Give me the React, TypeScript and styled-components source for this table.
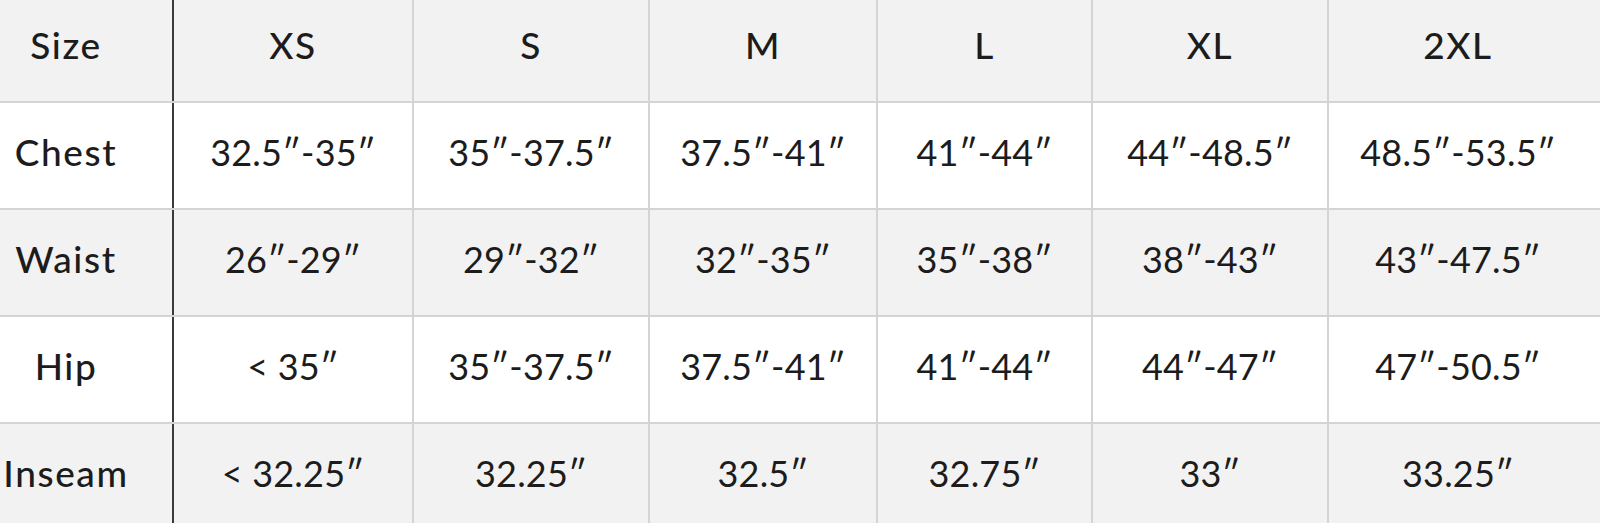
import styled, { createGlobalStyle } from "styled-components";

const sizes = ["XS", "S", "M", "L", "XL", "2XL"];

const measurements = [
  { label: "Chest", values: ["32.5″-35″", "35″-37.5″", "37.5″-41″", "41″-44″", "44″-48.5″", "48.5″-53.5″"] },
  { label: "Waist", values: ["26″-29″", "29″-32″", "32″-35″", "35″-38″", "38″-43″", "43″-47.5″"] },
  { label: "Hip", values: ["< 35″", "35″-37.5″", "37.5″-41″", "41″-44″", "44″-47″", "47″-50.5″"] },
  { label: "Inseam", values: ["< 32.25″", "32.25″", "32.5″", "32.75″", "33″", "33.25″"] },
];

export default function App() {
  return (
    <>
      <GlobalStyle />
      <Chart>
        <Row $shade>
          <Cell $label $head>Size</Cell>
          {sizes.map((s) => (
            <Cell key={s} $head>{s}</Cell>
          ))}
        </Row>
        {measurements.map((m, i) => (
          <Row key={m.label} $shade={i % 2 === 1}>
            <Cell $label $head>{m.label}</Cell>
            {m.values.map((v, j) => (
              <Cell key={j}>{v}</Cell>
            ))}
          </Row>
        ))}
      </Chart>
    </>
  );
}

const GlobalStyle = createGlobalStyle`
  html, body {
    margin: 0;
    padding: 0;
    background: #fff;
    overflow: hidden;
  }
  body {
    font-family: Lato, "Liberation Sans", sans-serif;
    color: #1c1c1c;
  }
`;

const Chart = styled.div`
  display: flex;
  flex-direction: column;
  width: 1640px;
  margin-left: -40px;
  margin-top: -4px;
`;

const Row = styled.div<{ $shade?: boolean }>`
  display: grid;
  grid-template-columns: 214px 240px 236px 228px 215px 236px 1fr;
  background-color: ${(p) => (p.$shade ? "#f2f2f2" : "#ffffff")};
  border-bottom: 2px solid #d4d4d4;
`;

const Cell = styled.div<{ $label?: boolean; $head?: boolean }>`
  height: 105px;
  box-sizing: border-box;
  padding-bottom: 8px;
  display: flex;
  align-items: center;
  justify-content: center;
  font-size: ${(p) => (p.$head ? "37px" : "36px")};
  font-weight: ${(p) => (p.$head ? 500 : 400)};
  letter-spacing: ${(p) => (p.$head ? "1.6px" : "0.2px")};
  border-right: 2px solid ${(p) => (p.$label ? "#3a3a3a" : "#d4d4d4")};
  white-space: nowrap;

  &:last-child {
    border-right: none;
    padding-right: 13px;
  }
`;
